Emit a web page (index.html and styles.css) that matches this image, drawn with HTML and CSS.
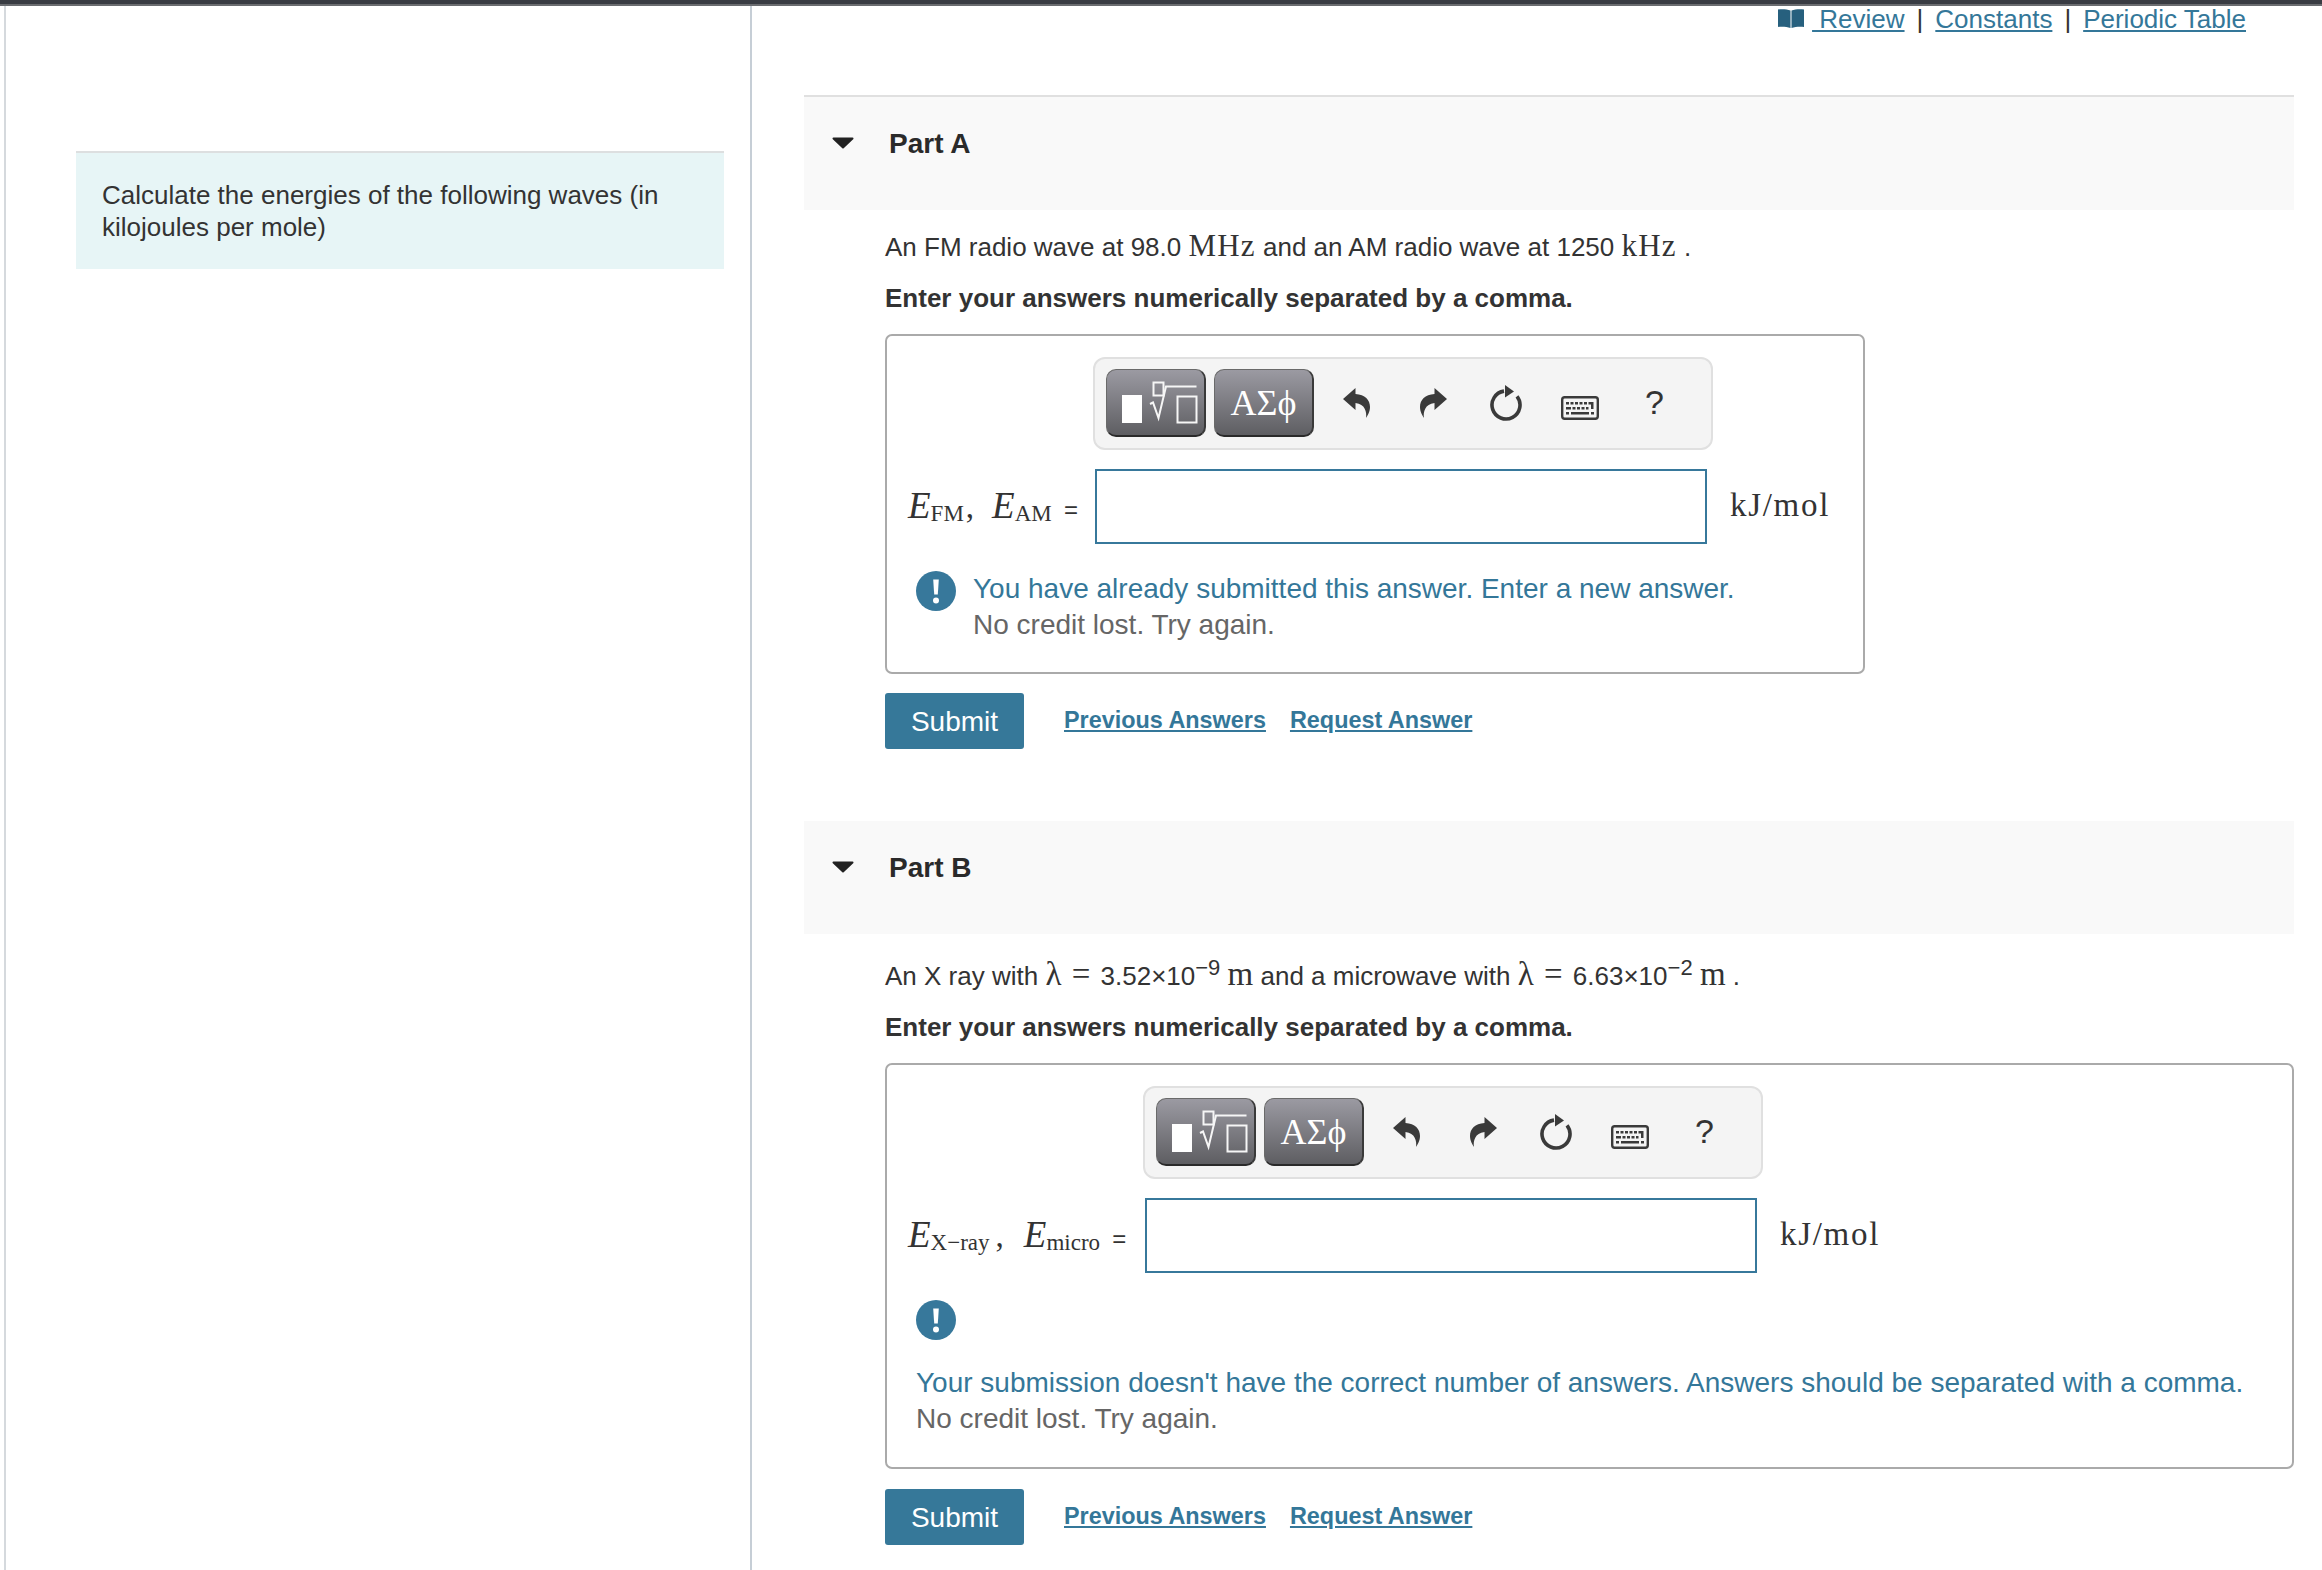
FILE: index.html
```html
<!DOCTYPE html>
<html lang="en">
<head>
<meta charset="utf-8">
<title>Part A and Part B</title>
<link rel="stylesheet" href="styles.css">
</head>
<body>
<svg class="defs" width="0" height="0" aria-hidden="true">
  <symbol id="i-undo" viewBox="0 0 27 30"><path d="M0 11 12.500 0V6C22 6.500 27 12 27 19 27 24 24.500 27.500 23 30 24 24 22 16 12.500 15V22Z"/></symbol>
  <symbol id="i-redo" viewBox="0 0 27 30"><path d="M27 11 14.500 0V6C5 6.500 0 12 0 19 0 24 2.500 27.500 4 30 3 24 5 16 14.500 15V22Z"/></symbol>
  <symbol id="i-reset" viewBox="0 0 32 36"><path d="M14 6.100A14 14 0 1 0 27 11.300" fill="none" stroke="#3a3a3a" stroke-width="3.600"/><path d="M15 0 24 6.500 15 12.500Z" fill="#3a3a3a"/></symbol>
  <symbol id="i-kbd" viewBox="0 0 38 24">
    <rect x="1.200" y="1.200" width="35.600" height="21.600" rx="2.500" fill="none" stroke="#3a3a3a" stroke-width="2.400"/>
    <path d="M5 6h3v2.500H5zM9.500 6h3v2.500h-3zM14 6h3v2.500h-3zM18.500 6h3v2.500h-3zM23 6h3v2.500h-3zM27.500 6h5v7h-2.500v-4.500h-2.500zM5 11h5v2.500H5zM11.500 11h3v2.500h-3zM16 11h3v2.500h-3zM20.500 11h3v2.500h-3zM25 11h2.500v2.500H25zM5 16h3v2.500H5zM10 16h18v2.500H10zM30 16h3v2.500h-3z" fill="#3a3a3a"/>
  </symbol>
  <symbol id="i-tpl" viewBox="0 0 100 68">
    <rect x="16" y="26" width="20" height="28" fill="#fff"/>
    <g fill="none" stroke="#f6f6f6" stroke-width="2">
      <rect x="47.500" y="13.500" width="10" height="13"/>
      <path d="M44 35 47 33.500 52.500 49 60 17.500H90.500"/>
      <rect x="71.500" y="27.500" width="19" height="26"/>
    </g>
  </symbol>
  <symbol id="i-info" viewBox="0 0 40 40">
    <circle cx="20" cy="20" r="20" fill="#37789b"/>
    <path d="M17.200 8.500h5.600l-1 15h-3.600z" fill="#fff"/>
    <circle cx="20" cy="29.500" r="3" fill="#fff"/>
  </symbol>
  <symbol id="i-caret" viewBox="0 0 22 12"><path d="M1.500 1.500H20.500L11 10.500Z" fill="#222" stroke="#222" stroke-width="2" stroke-linejoin="round"/></symbol>
</svg>

<div class="topbar"></div>
<div class="page">
  <aside class="intro-col">
    <div class="intro">Calculate the energies of the following waves (in kilojoules per mole)</div>
  </aside>

  <main class="main-col">
    <nav class="toplinks">
      <svg class="book" viewBox="0 0 26 19" aria-hidden="true"><path d="M0 .5C4 0 9 .2 12.500 1.500V19C9 17.800 4 17.600 0 18ZM26 .5C22 0 17 .2 13.500 1.500V19C17 17.800 22 17.600 26 18Z"/></svg>
      <a href="#">&nbsp;Review</a><span class="sep">|</span><a href="#">Constants</a><span class="sep">|</span><a href="#">Periodic Table</a>
    </nav>

    <section class="part part-a">
      <header class="part-head"><svg class="caret"><use href="#i-caret"/></svg><h2>Part A</h2></header>
      <div class="part-body">
        <p class="prompt">An FM radio wave at 98.0 <span class="m big">MHz</span> and an AM radio wave at 1250 <span class="m big">kHz</span> .</p>
        <p class="prompt strong">Enter your answers numerically separated by a comma.</p>
        <div class="answer answer-fit">
          <div class="answer-grid">
            <div class="toolbar">
              <button class="tbtn"><svg class="tpl"><use href="#i-tpl"/></svg></button>
              <button class="tbtn greek">ΑΣϕ</button>
              <svg class="ic ic-undo"><use href="#i-undo"/></svg>
              <svg class="ic ic-redo"><use href="#i-redo"/></svg>
              <svg class="ic ic-reset"><use href="#i-reset"/></svg>
              <svg class="ic ic-kbd"><use href="#i-kbd"/></svg>
              <span class="help">?</span>
            </div>
            <div class="label m"><i>E</i><sub>FM</sub><span class="comma">,</span><i>E</i><sub>AM</sub> <span class="eq">=</span></div>
            <div class="field"></div>
            <div class="unit m">kJ/mol</div>
          </div>
          <div class="msg msg-inline">
            <svg class="info"><use href="#i-info"/></svg>
            <div class="msg-text"><div class="blue">You have already submitted this answer. Enter a new answer.</div><div class="gray">No credit lost. Try again.</div></div>
          </div>
        </div>
        <div class="actions">
          <button class="submit">Submit</button>
          <a href="#">Previous Answers</a>
          <a href="#">Request Answer</a>
        </div>
      </div>
    </section>

    <section class="part part-b">
      <header class="part-head"><svg class="caret"><use href="#i-caret"/></svg><h2>Part B</h2></header>
      <div class="part-body">
        <p class="prompt">An X ray with <span class="m lg">λ = </span>3.52×10<sup>−9</sup> <span class="m lg">m</span> and a microwave with <span class="m lg">λ = </span>6.63×10<sup>−2</sup> <span class="m lg">m</span> .</p>
        <p class="prompt strong">Enter your answers numerically separated by a comma.</p>
        <div class="answer">
          <div class="answer-grid">
            <div class="toolbar">
              <button class="tbtn"><svg class="tpl"><use href="#i-tpl"/></svg></button>
              <button class="tbtn greek">ΑΣϕ</button>
              <svg class="ic ic-undo"><use href="#i-undo"/></svg>
              <svg class="ic ic-redo"><use href="#i-redo"/></svg>
              <svg class="ic ic-reset"><use href="#i-reset"/></svg>
              <svg class="ic ic-kbd"><use href="#i-kbd"/></svg>
              <span class="help">?</span>
            </div>
            <div class="label m"><i>E</i><sub>X−ray</sub><span class="comma">,</span><i>E</i><sub>micro</sub> <span class="eq">=</span></div>
            <div class="field"></div>
            <div class="unit m">kJ/mol</div>
          </div>
          <div class="msg msg-stack">
            <svg class="info"><use href="#i-info"/></svg>
            <div class="msg-text"><div class="blue">Your submission doesn't have the correct number of answers. Answers should be separated with a comma.</div><div class="gray">No credit lost. Try again.</div></div>
          </div>
        </div>
        <div class="actions">
          <button class="submit">Submit</button>
          <a href="#">Previous Answers</a>
          <a href="#">Request Answer</a>
        </div>
      </div>
    </section>
  </main>
</div>
</body>
</html>
```
FILE: styles.css
```css
* { box-sizing: border-box; }
html, body { margin: 0; height: 1570px; overflow: hidden; background: #fff; }
body { font-family: "Liberation Sans", Arial, sans-serif; color: #333; font-size: 26px; }
.defs { position: absolute; }
a { color: #347799; }

.topbar { height: 6px; background: #393c43; border-bottom: 2px solid #6a6c70; }
.page { display: flex; height: 1564px; padding-left: 4px; }

.intro-col { width: 748px; flex: none; padding: 145px 26px 0 70px; border-left: 2px solid #d5d9dd; border-right: 2px solid #c6ced6; }
.intro { background: #e7f5f6; border-top: 2px solid #dddfe0; padding: 26px 26px 26px; line-height: 32px; }

.main-col { flex: 1; min-width: 0; padding: 0 28px 0 52px; }
.toplinks { height: 89px; display: flex; justify-content: flex-end; align-items: flex-start; padding-right: 48px; line-height: 26px; }
.book { width: 26px; height: 19px; fill: #27607e; margin-top: 3px; margin-right: 8px; }
.sep { margin: 0 12px; color: #333; }

.part-b { margin-top: 72px; }
.part-head { height: 115px; background: #f9f9f9; border-top: 2px solid #e0e0e0; display: flex; align-items: flex-start; padding: 29px 0 0 28px; }
.part-b .part-head { height: 113px; border-top: 0; }
.caret { width: 22px; height: 12px; margin-top: 11px; flex: none; }
.part-head h2 { margin: 0 0 0 35px; font-size: 28px; line-height: 36px; font-weight: 700; color: #2a2a2a; }

.part-body { padding-left: 81px; }
.prompt { margin: 18px 0 0; line-height: 36px; height: 36px; white-space: nowrap; }
.part-b .prompt { margin-top: 22px; }
.prompt.strong { margin-top: 16px; font-weight: 700; }
.part-b .prompt.strong { margin-top: 17px; }
.m { font-family: "Liberation Serif", "Times New Roman", serif; }
.big { font-size: 31px; letter-spacing: 1.200px; }
.lg { font-size: 33px; word-spacing: 2px; }
sup { font-size: 22px; line-height: 0; }

.answer { margin-top: 18px; border: 2px solid #aaa; border-radius: 7px; padding: 21px 0 30px 21px; }
.answer-fit { width: 980px; padding-bottom: 29px; }
.answer-grid { display: grid; grid-template-rows: auto auto; row-gap: 19px; align-items: center; justify-content: start; }
.part-a .answer-grid { grid-template-columns: 187px 612px max-content; }
.part-b .answer-grid { grid-template-columns: 237px 612px max-content; }
.toolbar { grid-column: 2; grid-row: 1; justify-self: start; width: 620px; height: 93px; margin-left: -2px; background: #f4f4f4; border: 2px solid #e0e0e0; border-radius: 12px; display: flex; align-items: flex-start; padding: 10px 0 0 11px; }
.label { grid-column: 1; grid-row: 2; font-size: 37px; color: #333; white-space: nowrap; margin-top: -3px; }
.label sub { font-size: 23px; line-height: 0; vertical-align: -3px; }
.comma { font-size: 33px; margin-right: 18px; margin-left: 2px; }
.part-b .comma { margin-right: 20px; margin-left: 6px; }
.eq { font-family: "Liberation Sans", sans-serif; font-size: 24px; margin-left: 3px; }
.field { grid-column: 2; grid-row: 2; height: 75px; border: 2px solid #37789b; background: #fff; }
.unit { grid-column: 3; grid-row: 2; font-size: 33px; letter-spacing: 1.700px; padding-left: 23px; margin-top: -3px; }

.tbtn { width: 100px; height: 68px; padding: 0; margin-right: 8px; flex: none; border: 1px solid #6a6a6a; border-bottom: 2px solid #2a2a2a; border-right: 2px solid #3a3a3a; border-radius: 10px; background: linear-gradient(#9b9aa2, #5e5e62); color: #fff; }
.tpl { display: block; width: 100px; height: 68px; margin: -1px 0 0 -1px; }
.greek { font-family: "Liberation Serif", serif; font-size: 36px; line-height: 1; }
.ic { flex: none; fill: #3a3a3a; }
.ic-undo { width: 27px; height: 30px; margin: 19px 0 0 21px; }
.ic-redo { width: 27px; height: 30px; margin: 19px 0 0 50px; }
.ic-reset { width: 32px; height: 36px; margin: 16px 0 0 43px; }
.ic-kbd { width: 38px; height: 24px; margin: 27px 0 0 39px; }
.help { font-size: 34px; line-height: 36px; margin: 15px 0 0 46px; color: #333; }

.msg { color: #666; font-size: 28px; line-height: 36px; }
.msg-inline { display: flex; gap: 17px; margin-top: 27px; padding-left: 8px; }
.msg-stack { margin-top: 27px; padding-left: 8px; }
.msg-stack .msg-text { margin-top: 25px; }
.info { width: 40px; height: 40px; display: block; flex: none; }
.blue { color: #347799; white-space: nowrap; }
.gray { color: #666; }

.actions { display: flex; align-items: center; margin-top: 19px; }
.part-b .actions { margin-top: 20px; }
.actions a { font-weight: 700; font-size: 23.400px; margin: -1px 0 0 24px; }
.actions .submit + a { margin-left: 40px; }
.submit { width: 139px; height: 56px; border: 0; border-radius: 3px; background: #367899; color: #fff; font: 28px "Liberation Sans", sans-serif; padding: 1px 0 0; }
```
